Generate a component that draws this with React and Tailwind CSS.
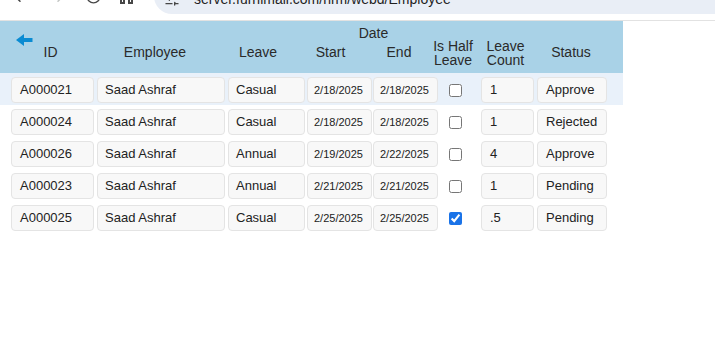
import { ArrowLeft, ArrowRight, RotateCw, SlidersHorizontal } from "lucide-react";

const leaves = [
  { id: "A000021", name: "Saad Ashraf", type: "Casual", start: "2/18/2025", end: "2/18/2025", half: false, count: "1", status: "Approve" },
  { id: "A000024", name: "Saad Ashraf", type: "Casual", start: "2/18/2025", end: "2/18/2025", half: false, count: "1", status: "Rejected" },
  { id: "A000026", name: "Saad Ashraf", type: "Annual", start: "2/19/2025", end: "2/22/2025", half: false, count: "4", status: "Approve" },
  { id: "A000023", name: "Saad Ashraf", type: "Annual", start: "2/21/2025", end: "2/21/2025", half: false, count: "1", status: "Pending" },
  { id: "A000025", name: "Saad Ashraf", type: "Casual", start: "2/25/2025", end: "2/25/2025", half: true, count: ".5", status: "Pending" },
];

const cols = "grid grid-cols-[86px_131px_79px_66px_67px_41px_56px_70px]";

function Field({ children, className = "" }) {
  return (
    <div className={`flex h-[26px] items-center rounded-[4px] border border-[#e4e4e4] bg-[#f8f8f8] text-[#222] ${className}`}>
      {children}
    </div>
  );
}

function BackArrow() {
  return (
    <svg width="17" height="12" viewBox="0 0 17 12">
      <path d="M0 6 L8 0 L8 4 L16.5 4 L16.5 8 L8 8 L8 12 Z" fill="#0a8bd2" />
    </svg>
  );
}

function BrowserBar() {
  return (
    <div className="flex h-[21px] items-start overflow-hidden border-b border-[#e2e2e2] bg-white">
      <ArrowLeft className="ml-[11px] mt-[-13px] text-[#474747]" size={18} strokeWidth={2} />
      <ArrowRight className="ml-[20px] mt-[-13px] text-[#c4c7c5]" size={18} strokeWidth={2} />
      <RotateCw className="ml-[18px] mt-[-12px] text-[#474747]" size={17} strokeWidth={2} />
      <div className="ml-[18px] mt-[-6px] flex gap-[3px]">
        <div className="h-[10px] w-[5px] border-2 border-[#474747]" />
        <div className="h-[10px] w-[5px] border-2 border-[#474747]" />
      </div>
      <div className="ml-[21px] mt-[-22px] flex h-[36px] flex-1 items-center rounded-l-full bg-[#e9eef6]">
        <SlidersHorizontal className="ml-[10px] mt-[6px] text-[#474747]" size={16} />
        <span className="ml-[14px] mt-[6px] text-[14px] text-[#1f1f1f]">server.furnimall.com/hrm/webd/Employee</span>
      </div>
    </div>
  );
}

export default function App() {
  return (
    <div className="min-h-screen bg-white font-['Liberation_Sans',Arial,sans-serif]">
      <BrowserBar />

      {/* table header */}
      <div className={`${cols} h-[52px] w-[623px] grid-rows-[24px_28px] bg-[#a9d2e7] pl-[11px] pr-[16px] text-[14px] leading-[14px] text-[#2a2a2a]`}>
        <div className="col-start-1 row-start-1 ml-[5px] mt-[13px]">
          <BackArrow />
        </div>
        <div className="col-start-1 row-start-2 flex justify-center pr-[7px]">ID</div>
        <div className="col-start-2 row-start-2 flex justify-center pr-[15px]">Employee</div>
        <div className="col-start-3 row-start-2 flex justify-center pr-[19px]">Leave</div>
        <div className="col-span-2 col-start-4 row-start-1 flex justify-center pt-[5px]">Date</div>
        <div className="col-start-4 row-start-2 flex justify-center pr-[19px]">Start</div>
        <div className="col-start-5 row-start-2 flex justify-center pr-[15px]">End</div>
        <div className="col-start-6 row-span-2 row-start-1 flex justify-center pr-[15px] pt-[18px]">
          <div className="whitespace-nowrap text-center">Is Half<br />Leave</div>
        </div>
        <div className="col-start-7 row-span-2 row-start-1 flex justify-center pr-[7px] pt-[18px]">
          <div className="whitespace-nowrap text-center">Leave<br />Count</div>
        </div>
        <div className="col-start-8 row-start-2 flex justify-center pr-[2px]">Status</div>
      </div>

      {/* rows */}
      {leaves.map((l, i) => (
        <div
          key={l.id}
          className={`${cols} h-[32px] w-[623px] items-start pl-[11px] pr-[16px] pt-[4px] text-[13px] ${i === 0 ? "bg-[#e9f1fa]" : ""}`}
        >
          <Field className="w-[83px] pl-[8px]">{l.id}</Field>
          <Field className="w-[128px] pl-[7px]">{l.name}</Field>
          <Field className="w-[77px] pl-[7px]">{l.type}</Field>
          <Field className="w-[65px] pl-[6px] text-[11px]">{l.start}</Field>
          <Field className="w-[65px] pl-[6px] text-[11px]">{l.end}</Field>
          <div className="flex h-[26px] items-center">
            <input type="checkbox" readOnly checked={l.half} className="ml-[9px] h-[13px] w-[13px] accent-[#1a73e8]" />
          </div>
          <Field className="w-[53px] pl-[8px]">{l.count}</Field>
          <Field className="w-[70px] pl-[8px]">{l.status}</Field>
        </div>
      ))}
    </div>
  );
}
